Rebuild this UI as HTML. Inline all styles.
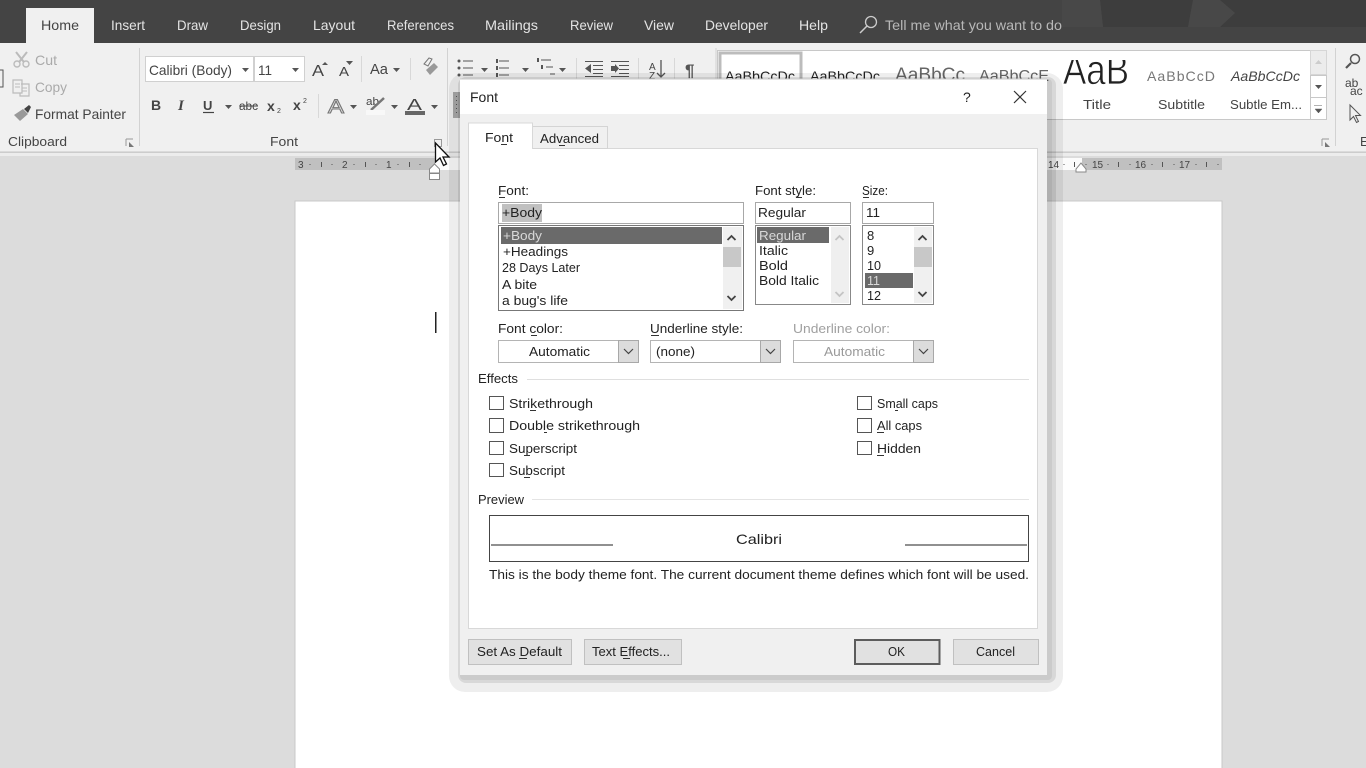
<!DOCTYPE html>
<html><head><meta charset="utf-8"><title>Font dialog</title>
<style>
html,body{margin:0;padding:0;width:1366px;height:768px;overflow:hidden;background:#dcdcdc}
svg{display:block;filter:blur(.35px)}
text{font-family:"Liberation Sans",sans-serif;font-size:13px;fill:#333;white-space:pre}
.t{fill:#e4e4e4;font-size:14px}
.r{fill:#444;font-size:13px}
.g{fill:#aaa}
.d{fill:#222;font-size:13px}
.w{fill:#d8d8d8}
.ru{font-size:10px;fill:#444}
.tick{stroke:#555;stroke-width:1}
.u{stroke:#333;stroke-width:1}
</style></head><body>
<svg width="1366" height="768" viewBox="0 0 1366 768" xmlns="http://www.w3.org/2000/svg" shape-rendering="geometricPrecision">
<!-- background -->
<rect width="1366" height="768" fill="#dcdcdc"/>
<!-- title strip -->
<rect width="1366" height="43" fill="#444"/>
<path d="M1100 0h93l-5 27h-85zM1220 0h146v27h-146l15-14z" fill="#3d3d3d"/>
<path d="M1062 0h38l3 27h-41zM1193 0h27l15 13-15 14h-32z" fill="#484848"/>
<rect x="26" y="8" width="68" height="35" fill="#f0f0f0"/>
<text x="41" y="30" class="t" style="fill:#444" textLength="38" lengthAdjust="spacingAndGlyphs">Home</text>
<text x="111" y="30" class="t" textLength="34" lengthAdjust="spacingAndGlyphs">Insert</text>
<text x="177" y="30" class="t" textLength="31" lengthAdjust="spacingAndGlyphs">Draw</text>
<text x="240" y="30" class="t" textLength="41" lengthAdjust="spacingAndGlyphs">Design</text>
<text x="313" y="30" class="t" textLength="42" lengthAdjust="spacingAndGlyphs">Layout</text>
<text x="387" y="30" class="t" textLength="67" lengthAdjust="spacingAndGlyphs">References</text>
<text x="485" y="30" class="t" textLength="53" lengthAdjust="spacingAndGlyphs">Mailings</text>
<text x="570" y="30" class="t" textLength="43" lengthAdjust="spacingAndGlyphs">Review</text>
<text x="644" y="30" class="t" textLength="30" lengthAdjust="spacingAndGlyphs">View</text>
<text x="705" y="30" class="t" textLength="63" lengthAdjust="spacingAndGlyphs">Developer</text>
<text x="799" y="30" class="t" textLength="29" lengthAdjust="spacingAndGlyphs">Help</text>
<circle cx="871" cy="22" r="5.5" fill="none" stroke="#ccc" stroke-width="1.3"/><path d="M867 26l-7 7" stroke="#ccc" stroke-width="1.5"/>
<text x="885" y="30" class="t" style="fill:#b8b8b8" textLength="177" lengthAdjust="spacingAndGlyphs">Tell me what you want to do</text>

<!-- ribbon -->
<rect y="43" width="1366" height="109" fill="#f0f0f0"/>
<rect y="151.500" width="1366" height="1.200" fill="#c6c6c6"/>
<rect y="153" width="1366" height="3" fill="#ececec"/>
<path d="M139.500 48v98M447.500 48v98M716 48v98M1335.500 48v98" stroke="#d2d2d2"/>

<!-- clipboard -->
<path d="M0 70h3v17H0" fill="none" stroke="#555" stroke-width="1"/>
<path d="M16 52l11 14M27 52L16 66" stroke="#bbb" stroke-width="2"/><circle cx="17" cy="64" r="3" fill="#f0f0f0" stroke="#bbb" stroke-width="1.4"/><circle cx="26" cy="64" r="3" fill="#f0f0f0" stroke="#bbb" stroke-width="1.4"/>
<text x="35" y="65" class="g" style="font-size:14px" textLength="22" lengthAdjust="spacingAndGlyphs">Cut</text>
<path d="M13 80h9v13h-9zM21 84h8v12h-9v-3" fill="#f0f0f0" stroke="#bbb" stroke-width="1.2"/><path d="M15 84h5M15 87h5M22 88h5M22 91h5" stroke="#bbb"/>
<text x="35" y="92" class="g" style="font-size:14px" textLength="32" lengthAdjust="spacingAndGlyphs">Copy</text>
<path d="M14 115l9-6 5 5-8 7z" fill="#999"/><path d="M24 109l5-4 2 2-3 6z" fill="#444"/>
<text x="35" y="119" class="r" style="font-size:14px" textLength="91" lengthAdjust="spacingAndGlyphs">Format Painter</text>
<text x="8" y="146" class="r" textLength="59" lengthAdjust="spacingAndGlyphs">Clipboard</text>
<path d="M126 139h7M126 139v7" stroke="#999" fill="none"/><path d="M134 147l-5-5v5z" fill="#777"/>

<!-- font group -->
<rect x="145.500" y="56.500" width="108" height="25" fill="#fff" stroke="#d0d0d0"/>
<rect x="254.500" y="56.500" width="50" height="25" fill="#fff" stroke="#d0d0d0"/>
<text x="149" y="75" class="r" style="font-size:14px" textLength="83" lengthAdjust="spacingAndGlyphs">Calibri (Body)</text>
<path d="M242 68h7l-3.500 4z" fill="#555"/>
<text x="258" y="75" class="r" style="font-size:14px" textLength="14" lengthAdjust="spacingAndGlyphs">11</text>
<path d="M292 68h7l-3.500 4z" fill="#555"/>
<text x="312" y="76" class="r" style="font-size:16px" textLength="12" lengthAdjust="spacingAndGlyphs">A</text><path d="M322 65h6l-3-3z" fill="#555"/>
<text x="339" y="76" class="r" style="font-size:13px" textLength="10" lengthAdjust="spacingAndGlyphs">A</text><path d="M346 61h7l-3.500 4z" fill="#555"/>
<path d="M361.500 56v26M410.500 58v22" stroke="#d8d8d8"/>
<text x="370" y="74" class="r" style="font-size:15px" textLength="18" lengthAdjust="spacingAndGlyphs">Aa</text><path d="M393 68h7l-3.500 4z" fill="#555"/>
<path d="M424 64l5-6 3 1-4 7z" fill="none" stroke="#777"/><path d="M426 70l8-7 4 4-8 8z" fill="#999"/>
<text x="151" y="110" class="r" style="font-weight:bold;font-size:14px">B</text>
<text x="178" y="110" class="r" style="font-style:italic;font-weight:bold;font-family:'Liberation Serif',serif;font-size:15px">I</text>
<text x="203" y="110" class="r" style="font-weight:bold;font-size:13px">U</text><path d="M203 112.500h11" stroke="#444" stroke-width="1.200"/>
<path d="M225 105h7l-3.500 4z" fill="#555"/>
<text x="239" y="110" class="r" style="font-size:12px" textLength="19" lengthAdjust="spacingAndGlyphs">abc</text><path d="M239 106h19" stroke="#444"/>
<text x="267" y="111" class="r" style="font-weight:bold;font-size:14px">x</text><text x="277" y="113" class="r" style="font-size:7px">2</text>
<text x="293" y="110" class="r" style="font-weight:bold;font-size:14px">x</text><text x="303" y="103" class="r" style="font-size:7px">2</text>
<path d="M318.500 94v24" stroke="#d8d8d8"/>
<text x="328" y="113" style="font-size:19px;fill:#e8e8e8;stroke:#777;stroke-width:1" textLength="16" lengthAdjust="spacingAndGlyphs">A</text>
<path d="M350 105h7l-3.500 4z" fill="#555"/>
<text x="366" y="105" class="r" style="font-size:11px" textLength="13" lengthAdjust="spacingAndGlyphs">ab</text><path d="M371 110l13-12" stroke="#777" stroke-width="2.500"/><rect x="366" y="110" width="19" height="5" fill="#f8f8f8"/>
<path d="M391 105h7l-3.500 4z" fill="#555"/>
<text x="407" y="110" class="r" style="font-size:16px" textLength="15" lengthAdjust="spacingAndGlyphs">A</text><rect x="405" y="111" width="20" height="4" fill="#666"/>
<path d="M431 105h7l-3.500 4z" fill="#555"/>
<text x="270" y="146" class="r" textLength="28" lengthAdjust="spacingAndGlyphs">Font</text>
<rect x="434.500" y="139.500" width="7" height="7" fill="none" stroke="#999"/>

<!-- paragraph -->
<g fill="#555">
<circle cx="459" cy="61" r="1.500"/><circle cx="459" cy="68" r="1.500"/><circle cx="459" cy="75" r="1.500"/>
<path d="M463 60.500h10v1h-10zM463 67.500h10v1h-10zM463 74.500h10v1h-10z"/>
<path d="M481 68h7l-3.500 4z"/><path d="M499 60.500h10v1h-10zM499 67.500h10v1h-10zM499 74.500h10v1h-10zM496 59h2v4h-2zM496 66h2v4h-2zM496 73h2v4h-2z"/><path d="M522 68h7l-3.500 4z"/>
<path d="M541 59.500h10v1h-10zM546 66.500h7v1h-7zM550 73.500h5v1h-5zM537 58h2v4h-2zM541 65h2v4h-2z"/><path d="M559 68h7l-3.500 4z"/>
<path d="M585 61h18v1h-18zM585 76h18v1h-18zM593 65h10v1h-10zM593 69h10v1h-10zM593 73h10v1h-10zM591 64v9l-6-4.500zM611 61h18v1h-18zM611 76h18v1h-18zM619 65h10v1h-10zM619 69h10v1h-10zM619 73h10v1h-10zM611 66h4v-2l4 4.500-4 4.500v-2h-4z"/>
</g>
<path d="M576.500 58v22M638.500 58v22M674.500 58v22" stroke="#d8d8d8"/>
<text x="649" y="70" class="r" style="font-size:10px">A</text><text x="649" y="79" class="r" style="font-size:10px">Z</text>
<path d="M661 60v17M657 73l4 4 4-4" stroke="#555" fill="none" stroke-width="1.300"/>
<text x="685" y="76" class="r" style="font-size:17px;font-weight:bold;fill:#555">¶</text>
<!-- para group handle seen through shadow -->
<rect x="453" y="92" width="7" height="26" fill="#a8a8a8"/>
<path d="M456.500 96v1M456.500 100v1M456.500 104v1M456.500 108v1M456.500 112v1" stroke="#555"/>

<!-- styles gallery -->
<rect x="717.500" y="50.500" width="593" height="69" fill="#fff" stroke="#c8c8c8"/>
<rect x="720" y="53" width="81" height="66" fill="#fff" stroke="#bcbcbc" stroke-width="3"/>
<text x="725" y="81" style="font-size:14px;fill:#222" textLength="70" lengthAdjust="spacingAndGlyphs">AaBbCcDc</text>
<text x="810" y="81" style="font-size:14px;fill:#222" textLength="70" lengthAdjust="spacingAndGlyphs">AaBbCcDc</text>
<text x="895" y="81" style="font-size:19px;fill:#666" textLength="70" lengthAdjust="spacingAndGlyphs">AaBbCc</text>
<text x="979" y="81" style="font-size:16px;fill:#666" textLength="70" lengthAdjust="spacingAndGlyphs">AaBbCcE</text>
<clipPath id="ttl"><rect x="1055" y="60" width="80" height="25"/></clipPath>
<g clip-path="url(#ttl)"><text x="1063" y="84" style="font-size:42px;fill:#222;stroke:#fff;stroke-width:.7" textLength="66" lengthAdjust="spacingAndGlyphs">AaB</text></g>
<text x="1147" y="81" style="font-size:14px;fill:#777;letter-spacing:1px" textLength="69" lengthAdjust="spacingAndGlyphs">AaBbCcD</text>
<text x="1231" y="81" style="font-size:14px;fill:#444;font-style:italic" textLength="69" lengthAdjust="spacingAndGlyphs">AaBbCcDc</text>
<text x="1083" y="109" class="r" textLength="28" lengthAdjust="spacingAndGlyphs">Title</text>
<text x="1158" y="109" class="r" textLength="47" lengthAdjust="spacingAndGlyphs">Subtitle</text>
<text x="1230" y="109" class="r" textLength="72" lengthAdjust="spacingAndGlyphs">Subtle Em...</text>
<rect x="1310.500" y="50.500" width="16" height="24" fill="#ececec" stroke="#d6d6d6"/>
<rect x="1310.500" y="75.500" width="16" height="22" fill="#fff" stroke="#c8c8c8"/>
<rect x="1310.500" y="97.500" width="16" height="22" fill="#fff" stroke="#c8c8c8"/>
<path d="M1315 64h7l-3.500-4z" fill="#ccc"/><path d="M1315 85h7l-3.500 4z" fill="#555"/>
<path d="M1314 105.500h8M1315 109h7l-3.500 4z" stroke="#666" stroke-width=".5" fill="#555"/>
<path d="M1322 139h7M1322 139v7" stroke="#999" fill="none"/><path d="M1330 147l-5-5v5z" fill="#777"/>
<!-- editing -->
<circle cx="1355" cy="59" r="4.500" fill="none" stroke="#555" stroke-width="1.500"/><path d="M1351 63l-5 5" stroke="#555" stroke-width="2.200"/>
<text x="1345" y="87" class="r" style="font-size:12px">ab</text><text x="1350" y="95" class="r" style="font-size:12px">ac</text>
<path d="M1350 105v15l3.500-3.500 3 6 2-1-3-6h5z" fill="#f0f0f0" stroke="#555"/>
<text x="1360" y="146" class="r">E</text>

<!-- ruler -->
<rect x="295" y="158" width="140" height="12" fill="#c0c0c0"/>
<rect x="435" y="158" width="647" height="12" fill="#fbfbfb"/>
<rect x="1082" y="158" width="140" height="12" fill="#c0c0c0"/>
<g class="ru">
<text x="298" y="168" class="ru">3</text><text x="342" y="168" class="ru">2</text><text x="386" y="168" class="ru">1</text>
<text x="1048" y="168" class="ru" textLength="11">14</text><text x="1092" y="168" class="ru" textLength="11">15</text><text x="1135" y="168" class="ru" textLength="11">16</text><text x="1179" y="168" class="ru" textLength="11">17</text>
</g>
<path class="tick" d="M321.500 162v5M365.500 162v5M409.500 162v5M1074.500 162v5M1118.500 162v5M1162.500 162v5M1206.500 162v5"/>
<path class="tick" d="M310 164v1M332 164v1M354 164v1M376 164v1M398 164v1M420 164v1M1064 164v1M1086 164v1M1108 164v1M1130 164v1M1152 164v1M1174 164v1M1196 164v1M1218 164v1"/>
<path d="M1076 172v-3l5-6 5 6v3z" fill="#fff" stroke="#888"/>
<path d="M429.500 169l5-5 5 5v4h-10zM429.500 173.500h10v6h-10z" fill="#fff" stroke="#888"/>

<!-- page -->
<rect x="295" y="201" width="927" height="600" fill="#fff" stroke="#c8c8c8"/>
<rect x="435" y="312" width="1.500" height="21" fill="#222"/>

<!-- dialog shadow (translucent layers) -->
<rect x="449" y="73" width="614" height="619" rx="16" fill="#000" fill-opacity=".065"/>
<rect x="458" y="77" width="598" height="606" rx="8" fill="#000" fill-opacity=".09"/>
<rect x="460" y="79" width="592" height="601" rx="4" fill="#000" fill-opacity=".06"/>
<!-- dialog -->
<rect x="460" y="79" width="587" height="596" fill="#f0f0f0"/>
<rect x="460" y="79" width="587" height="35" fill="#fff"/>
<path d="M460 79h587" stroke="#c8c8c8"/>
<text x="470" y="102" class="d" style="font-size:14px" textLength="28" lengthAdjust="spacingAndGlyphs">Font</text>
<text x="963" y="102" class="d" style="font-size:14px">?</text>
<path d="M1014 91l12 12M1026 91l-12 12" stroke="#333" stroke-width="1.200"/>
<!-- tab panel -->
<rect x="468.500" y="148.500" width="569" height="480" fill="#fff" stroke="#d8d8d8"/>
<rect x="532.500" y="126.500" width="75" height="22" fill="#f0f0f0" stroke="#d4d4d4"/>
<path d="M468.500 149v-26h64v26" fill="#fff" stroke="#d8d8d8"/>
<rect x="469" y="146" width="63" height="4" fill="#fff"/>
<text x="485" y="142" class="d" textLength="28" lengthAdjust="spacingAndGlyphs">Font</text><path class="u" d="M501 144.500h6"/>
<text x="540" y="143" class="d" textLength="59" lengthAdjust="spacingAndGlyphs">Advanced</text><path class="u" d="M559 145.500h6"/>

<!-- labels -->
<text x="498" y="195" class="d" textLength="31" lengthAdjust="spacingAndGlyphs">Font:</text><path class="u" d="M499 197.500h6"/>
<text x="755" y="195" class="d" textLength="61" lengthAdjust="spacingAndGlyphs">Font style:</text><path class="u" d="M796 197.500h6"/>
<text x="862" y="195" class="d" textLength="26" lengthAdjust="spacingAndGlyphs">Size:</text><path class="u" d="M863 197.500h6"/>
<!-- inputs -->
<g fill="#fff" stroke="#a8a8a8">
<rect x="498.500" y="202.500" width="245" height="21"/>
<rect x="755.500" y="202.500" width="95" height="21"/>
<rect x="862.500" y="202.500" width="71" height="21"/>
<rect x="498.500" y="225.500" width="245" height="85" stroke="#777"/>
<rect x="755.500" y="225.500" width="95" height="79" stroke="#888"/>
<rect x="862.500" y="225.500" width="71" height="79" stroke="#888"/>
</g>
<rect x="502" y="204" width="40" height="18" fill="#c0c0c0"/>
<text x="502" y="217" class="d" textLength="40" lengthAdjust="spacingAndGlyphs">+Body</text>
<text x="758" y="217" class="d" textLength="48" lengthAdjust="spacingAndGlyphs">Regular</text>
<text x="866" y="217" class="d" textLength="14" lengthAdjust="spacingAndGlyphs">11</text>
<!-- font list -->
<rect x="501" y="227" width="221" height="17" fill="#6a6a6a"/>
<text x="503" y="240" class="w" textLength="39" lengthAdjust="spacingAndGlyphs">+Body</text>
<text x="503" y="256" class="d" textLength="65" lengthAdjust="spacingAndGlyphs">+Headings</text>
<text x="502" y="272" class="d" textLength="78" lengthAdjust="spacingAndGlyphs">28 Days Later</text>
<text x="502" y="289" class="d" textLength="35" lengthAdjust="spacingAndGlyphs">A bite</text>
<text x="502" y="305" class="d" textLength="66" lengthAdjust="spacingAndGlyphs">a bug's life</text>
<rect x="723" y="227" width="19" height="82" fill="#f0f0f0"/>
<rect x="723" y="247" width="18" height="20" fill="#c8c8c8"/>
<path d="M727.500 240l4-4 4 4M727.500 296l4 4 4-4" fill="none" stroke="#444" stroke-width="1.800"/>
<!-- style list -->
<rect x="757" y="227" width="72" height="16" fill="#6a6a6a"/>
<text x="759" y="240" class="w" textLength="47" lengthAdjust="spacingAndGlyphs">Regular</text>
<text x="759" y="255" class="d" textLength="29" lengthAdjust="spacingAndGlyphs">Italic</text>
<text x="759" y="270" class="d" textLength="29" lengthAdjust="spacingAndGlyphs">Bold</text>
<text x="759" y="285" class="d" textLength="60" lengthAdjust="spacingAndGlyphs">Bold Italic</text>
<rect x="831" y="227" width="18" height="76" fill="#efefef"/>
<path d="M835.500 240l4-4 4 4M835.500 292l4 4 4-4" fill="none" stroke="#c4c4c4" stroke-width="1.800"/>
<!-- size list -->
<rect x="865" y="273" width="48" height="15" fill="#6a6a6a"/>
<text x="867" y="240" class="d">8</text>
<text x="867" y="255" class="d">9</text>
<text x="867" y="270" class="d" textLength="14" lengthAdjust="spacingAndGlyphs">10</text>
<text x="867" y="285" class="w" textLength="13" lengthAdjust="spacingAndGlyphs">11</text>
<text x="867" y="300" class="d" textLength="14" lengthAdjust="spacingAndGlyphs">12</text>
<rect x="914" y="227" width="18" height="76" fill="#f0f0f0"/>
<rect x="914" y="247" width="18" height="20" fill="#c8c8c8"/>
<path d="M918.500 240l4-4 4 4M918.500 292l4 4 4-4" fill="none" stroke="#444" stroke-width="1.800"/>

<!-- combos -->
<text x="498" y="333" class="d" textLength="65" lengthAdjust="spacingAndGlyphs">Font color:</text><path class="u" d="M531 335.500h6"/>
<text x="650" y="333" class="d" textLength="93" lengthAdjust="spacingAndGlyphs">Underline style:</text><path class="u" d="M651 335.500h8"/>
<text x="793" y="333" class="d" style="fill:#a0a0a0" textLength="97" lengthAdjust="spacingAndGlyphs">Underline color:</text>
<g stroke="#b4b4b4" fill="#fff"><rect x="498.500" y="340.500" width="140" height="22"/><rect x="650.500" y="340.500" width="130" height="22"/><rect x="793.500" y="340.500" width="140" height="22"/></g>
<g fill="#dcdcdc" stroke="#a8a8a8"><rect x="618.500" y="340.500" width="20" height="22"/><rect x="760.500" y="340.500" width="20" height="22"/><rect x="913.500" y="340.500" width="20" height="22"/></g>
<path d="M624 349l4.500 4.500 4.500-4.500M766 349l4.500 4.500 4.500-4.500M919 349l4.500 4.500 4.500-4.500" fill="none" stroke="#444" stroke-width="1.200"/>
<text x="529" y="356" class="d" textLength="61" lengthAdjust="spacingAndGlyphs">Automatic</text>
<text x="656" y="356" class="d" textLength="39" lengthAdjust="spacingAndGlyphs">(none)</text>
<text x="824" y="356" class="d" style="fill:#9a9a9a" textLength="61" lengthAdjust="spacingAndGlyphs">Automatic</text>

<!-- effects -->
<text x="478" y="383" class="d" textLength="40" lengthAdjust="spacingAndGlyphs">Effects</text>
<path d="M527 379.500h502" stroke="#dfdfdf"/>
<g fill="#fff" stroke="#555">
<rect x="489.500" y="396.500" width="14" height="13"/><rect x="489.500" y="418.500" width="14" height="14"/><rect x="489.500" y="441.500" width="14" height="13"/><rect x="489.500" y="463.500" width="14" height="13"/>
<rect x="857.500" y="396.500" width="14" height="13"/><rect x="857.500" y="418.500" width="14" height="14"/><rect x="857.500" y="441.500" width="14" height="13"/>
</g>
<text x="509" y="408" class="d" textLength="84" lengthAdjust="spacingAndGlyphs">Strikethrough</text><path class="u" d="M530 410.500h6"/>
<text x="509" y="430" class="d" textLength="131" lengthAdjust="spacingAndGlyphs">Double strikethrough</text><path class="u" d="M544 432.500h3"/>
<text x="509" y="453" class="d" textLength="68" lengthAdjust="spacingAndGlyphs">Superscript</text><path class="u" d="M524 455.500h6"/>
<text x="509" y="475" class="d" textLength="56" lengthAdjust="spacingAndGlyphs">Subscript</text><path class="u" d="M524 477.500h6"/>
<text x="877" y="408" class="d" textLength="61" lengthAdjust="spacingAndGlyphs">Small caps</text><path class="u" d="M895 410.500h3"/>
<text x="877" y="430" class="d" textLength="45" lengthAdjust="spacingAndGlyphs">All caps</text><path class="u" d="M877 432.500h7"/>
<text x="877" y="453" class="d" textLength="44" lengthAdjust="spacingAndGlyphs">Hidden</text><path class="u" d="M877 455.500h7"/>

<!-- preview -->
<text x="478" y="504" class="d" textLength="46" lengthAdjust="spacingAndGlyphs">Preview</text>
<path d="M532 499.500h497" stroke="#e4e4e4"/>
<rect x="489.500" y="515.500" width="539" height="46" fill="#fff" stroke="#444"/>
<text x="736" y="544" style="font-size:14px;fill:#222" textLength="46" lengthAdjust="spacingAndGlyphs">Calibri</text>
<path d="M491 545h122M905 545h122" stroke="#222"/>
<text x="489" y="579" class="d" textLength="540" lengthAdjust="spacingAndGlyphs">This is the body theme font. The current document theme defines which font will be used.</text>

<!-- buttons -->
<g fill="#e1e1e1" stroke="#c0c0c0">
<rect x="468.500" y="639.500" width="103" height="25"/>
<rect x="584.500" y="639.500" width="97" height="25"/>
<rect x="953.500" y="639.500" width="85" height="25"/>
</g>
<rect x="855" y="640" width="84.500" height="24" fill="#e1e1e1" stroke="#5c5c5c" stroke-width="2"/>
<text x="477" y="656" class="d" textLength="85" lengthAdjust="spacingAndGlyphs">Set As Default</text><path class="u" d="M519 658.500h8"/>
<text x="592" y="656" class="d" textLength="78" lengthAdjust="spacingAndGlyphs">Text Effects...</text><path class="u" d="M623 658.500h7"/>
<text x="888" y="656" class="d" textLength="17" lengthAdjust="spacingAndGlyphs">OK</text>
<text x="976" y="656" class="d" textLength="39" lengthAdjust="spacingAndGlyphs">Cancel</text>

<!-- mouse pointer -->
<path d="M435.500 143v19l4.500-4 3.500 7.500 3-1.500-3.500-7h6z" fill="#fff" stroke="#111" stroke-width="1.300"/>
</svg>
</body></html>
